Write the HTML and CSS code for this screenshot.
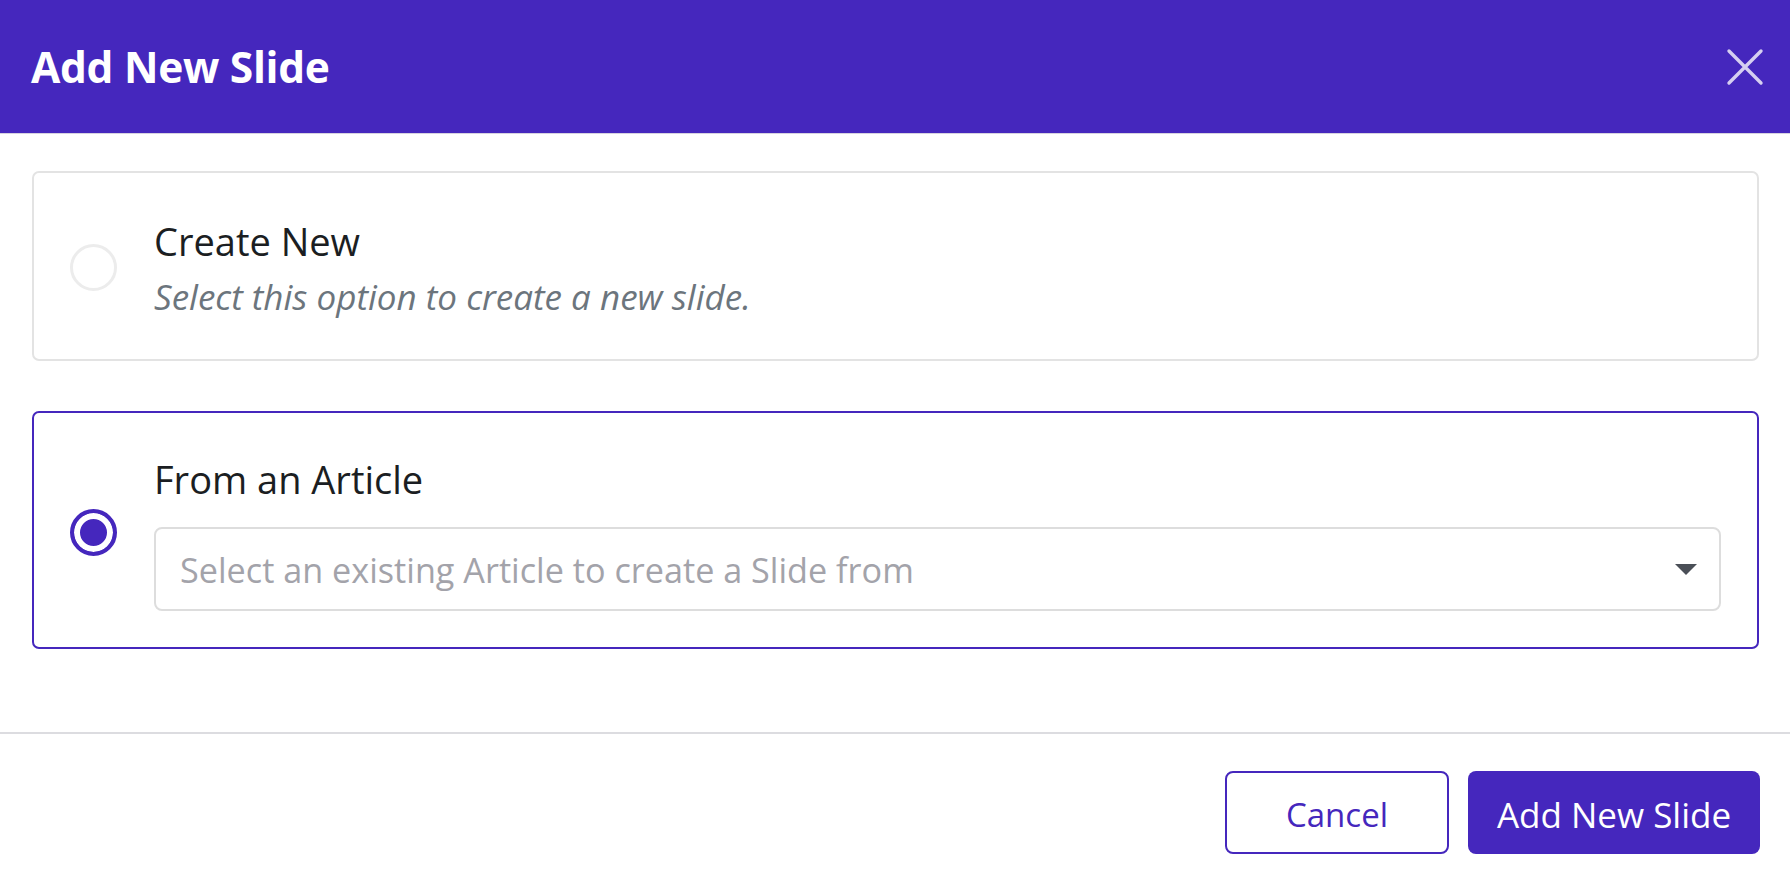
FILE: index.html
```html
<!DOCTYPE html>
<html lang="en">
<head>
    <meta charset="UTF-8">
    <meta name="viewport" content="width=device-width, initial-scale=1.0">
    <title>Add New Slide</title>
    <link rel="stylesheet" href="styles.css">
</head>
<body>
    <div class="modal">
        <header class="modal-header">
            <h1>Add New Slide</h1>
            <button class="close" aria-label="Close">
                <svg width="38" height="38" viewBox="0 0 38 38">
                    <path d="M3 3 L35 35 M35 3 L3 35" stroke="currentColor" stroke-width="3.4" stroke-linecap="round" fill="none"/>
                </svg>
            </button>
        </header>

        <div class="modal-body">
            <label class="option" id="opt-new">
                <input type="radio" name="source" class="radio">
                <div class="option-text">
                    <div class="option-title">Create New</div>
                    <div class="option-desc">Select this option to create a new slide.</div>
                </div>
            </label>

            <label class="option option-active" id="opt-article">
                <input type="radio" name="source" class="radio" checked>
                <div class="option-text">
                    <div class="option-title">From an Article</div>
                    <div class="select">
                        <span class="placeholder">Select an existing Article to create a Slide from</span>
                        <svg width="22" height="11" viewBox="0 0 22 11"><path d="M0 0 H22 L11 11 Z" fill="#4a4f57"/></svg>
                    </div>
                </div>
            </label>
        </div>

        <footer class="modal-footer">
            <button class="btn btn-outline">Cancel</button>
            <button class="btn btn-primary">Add New Slide</button>
        </footer>
    </div>
</body>
</html>
```

FILE: styles.css
```css
body {
    margin: 0;
    font-family: "Open Sans", "Noto Sans", Arial, sans-serif;
    color: #1b1e22;
    background: #fff;
}

.modal {
    height: 100vh;
    display: flex;
    flex-direction: column;
}

.modal-header {
    height: 133px;
    background: #4527bd;
    border-bottom: 1px solid #d6d2e0;
    display: flex;
    align-items: center;
    justify-content: space-between;
    padding: 0 26px 0 31px;
    flex-shrink: 0;
}
.modal-header h1 {
    margin: 0;
    color: #fff;
    font-size: 42.5px;
    font-weight: 700;
    letter-spacing: -0.3px;
}
.close {
    background: none;
    border: none;
    padding: 0;
    color: rgba(255, 255, 255, 0.78);
    cursor: pointer;
    display: flex;
}

.modal-body {
    flex: 1;
    padding: 37px 31px 0 32px;
    display: flex;
    flex-direction: column;
    gap: 50px;
}

.option {
    display: flex;
    align-items: center;
    gap: 37px;
    border: 2px solid #e3e3e3;
    border-radius: 7px;
    padding: 42px 36px 40px;
    cursor: pointer;
}
.option-active {
    border-color: #4527bd;
    padding: 40px 36px 36px;
}

.radio {
    appearance: none;
    -webkit-appearance: none;
    margin: 0;
    width: 47px;
    height: 47px;
    border-radius: 50%;
    border: 3px solid #ececec;
    background: #fff;
    flex-shrink: 0;
}
.radio:checked {
    border: 4px solid #4527bd;
    background: #4527bd;
    box-shadow: inset 0 0 0 6px #fff;
}

.option-text {
    flex: 1;
    display: flex;
    flex-direction: column;
}
.option-title {
    font-size: 38px;
    line-height: 52px;
}
.option-desc {
    margin-top: 8px;
    font-size: 35px;
    line-height: 44px;
    font-style: italic;
    color: #6c757d;
}

.select {
    margin-top: 22px;
    height: 84px;
    box-sizing: border-box;
    border: 2px solid #dddddd;
    border-radius: 8px;
    padding: 0 22px 0 24px;
    display: flex;
    align-items: center;
    justify-content: space-between;
}
.placeholder {
    font-size: 34.2px;
    color: #a3a3aa;
}

.modal-footer {
    border-top: 2px solid #dcdce0;
    padding: 37px 30px 32px;
    display: flex;
    justify-content: flex-end;
    gap: 19px;
    flex-shrink: 0;
}
.btn {
    height: 83px;
    padding-top: 4px;
    border-radius: 8px;
    font-family: inherit;
    font-size: 33px;
    cursor: pointer;
}
.btn-outline {
    width: 224px;
    background: #fff;
    color: #4527bd;
    border: 2px solid #4527bd;
}
.btn-primary {
    width: 292px;
    background: #4527bd;
    color: #fff;
    border: none;
    font-size: 35px;
}
.btn-primary:hover {
    background: #3a1fa3;
}
```
